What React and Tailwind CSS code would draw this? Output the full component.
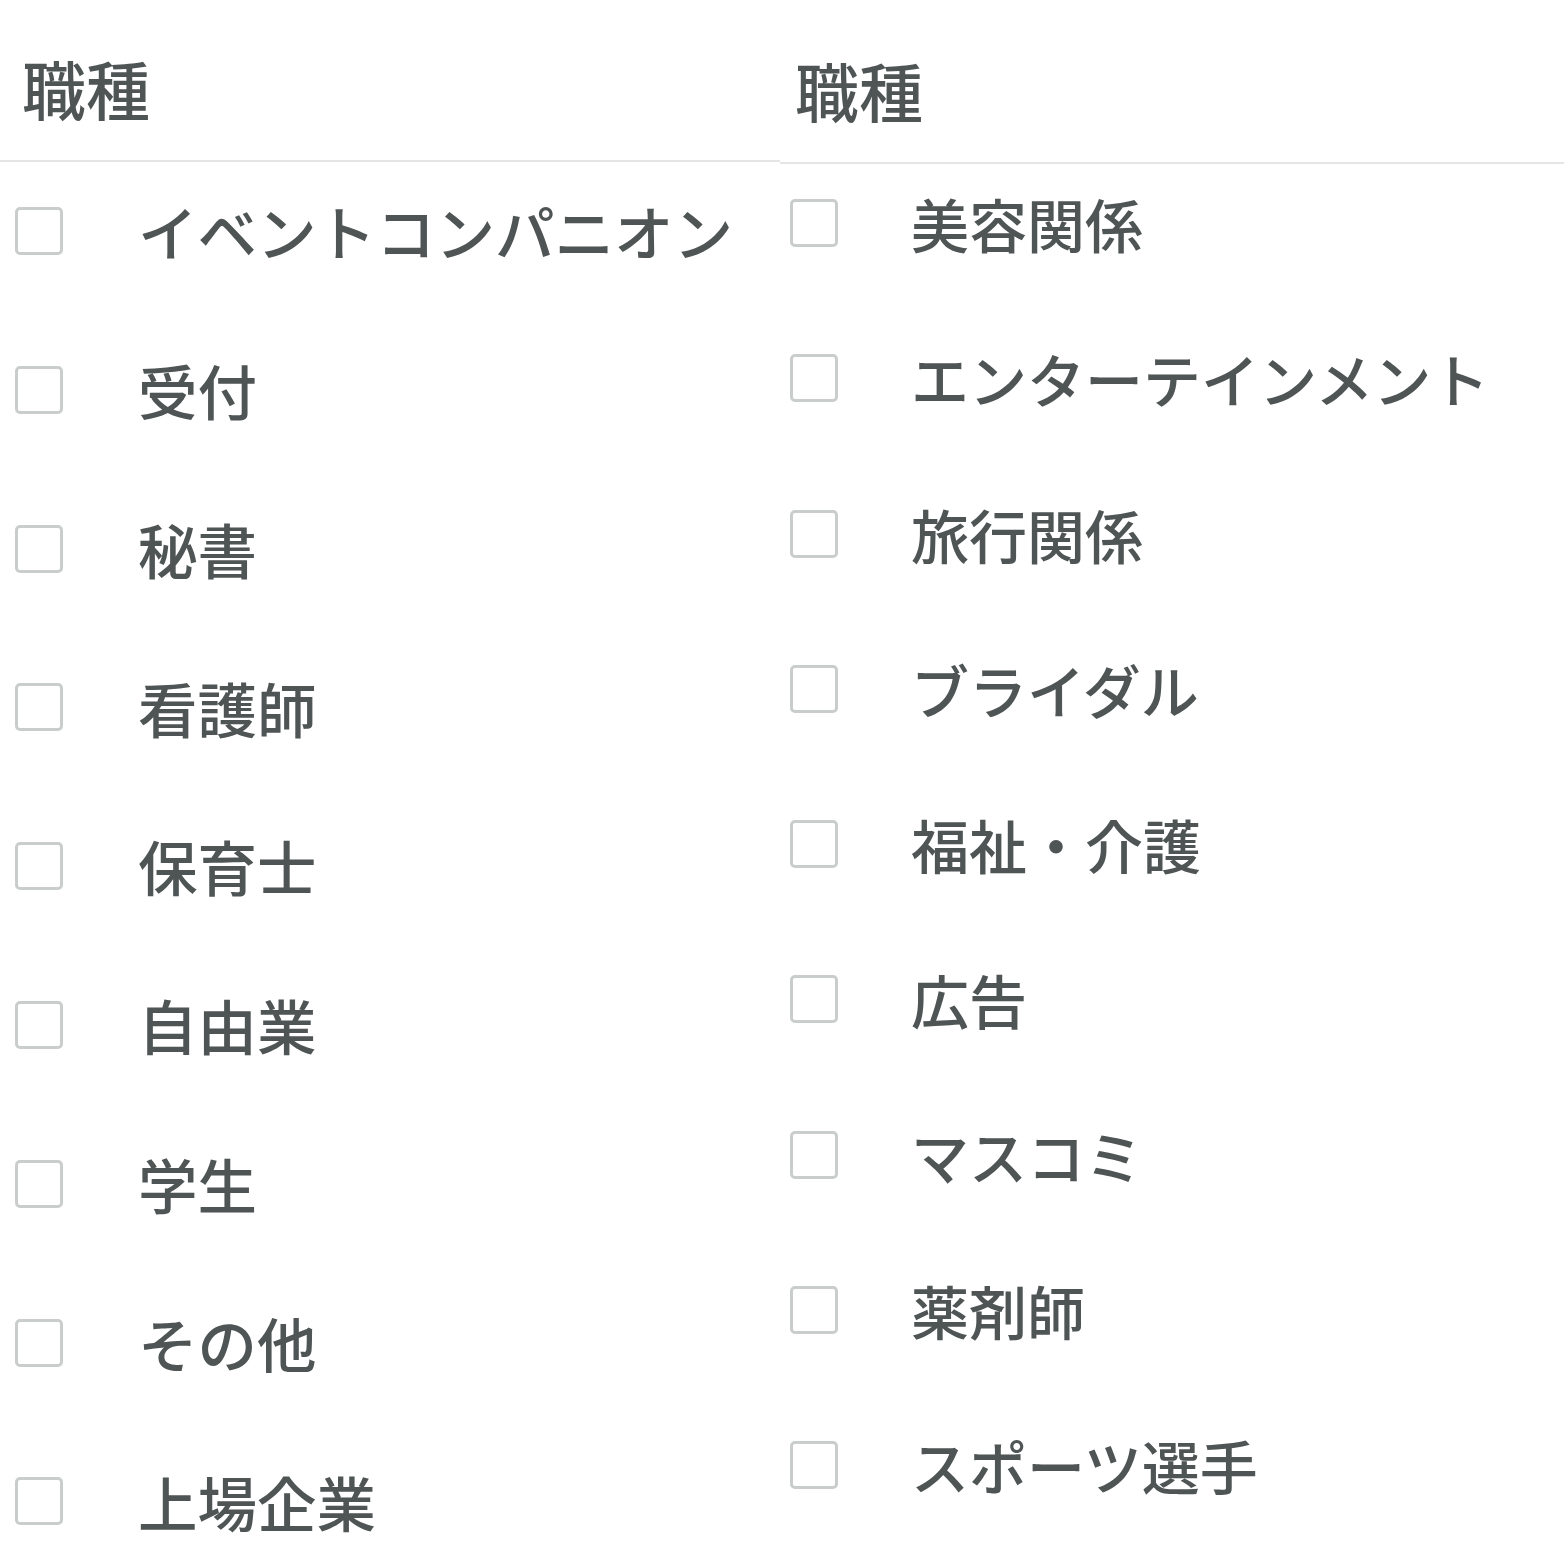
const leftItems = [
  "イベントコンパニオン",
  "受付",
  "秘書",
  "看護師",
  "保育士",
  "自由業",
  "学生",
  "その他",
  "上場企業",
];

const rightItems = [
  "美容関係",
  "エンターテインメント",
  "旅行関係",
  "ブライダル",
  "福祉・介護",
  "広告",
  "マスコミ",
  "薬剤師",
  "スポーツ選手",
];

function Checkbox() {
  return (
    <span className="block w-[48px] h-[48px] shrink-0 rounded-[5px] border-[3px] border-[#c9cecd] bg-white" />
  );
}

function Column({ items, side }) {
  const isLeft = side === "left";
  return (
    <div className={isLeft ? "w-[780px] shrink-0" : "flex-1"}>
      {/* Header */}
      <div
        className={`border-b-2 border-[#e4e6e6] ${
          isLeft ? "h-[162px] pl-[22px] pt-[55px]" : "h-[164px] pl-[15px] pt-[57px]"
        }`}
      >
        <h2 className="text-[64px] leading-none font-medium text-[#4f5555]">職種</h2>
      </div>

      {/* Options */}
      <ul
        className={`flex flex-col ${
          isLeft ? "pt-[45px] gap-[110.8px] pl-[15px]" : "pt-[35px] gap-[107.3px] pl-[10px]"
        }`}
      >
        {items.map((label) => (
          <li key={label} className="flex items-center h-[48px]">
            <Checkbox />
            <span
              className={`${
                isLeft ? "ml-[75px] text-[59.5px]" : "ml-[73px] text-[58px]"
              } leading-none font-medium whitespace-nowrap text-[#4f5555]`}
            >
              {label}
            </span>
          </li>
        ))}
      </ul>
    </div>
  );
}

export default function App() {
  return (
    <div
      className="w-[1564px] h-[1564px] bg-white flex overflow-hidden"
      style={{ fontFamily: '"Noto Sans CJK JP", "Noto Sans", sans-serif' }}
    >
      <Column items={leftItems} side="left" />
      <Column items={rightItems} side="right" />
    </div>
  );
}
